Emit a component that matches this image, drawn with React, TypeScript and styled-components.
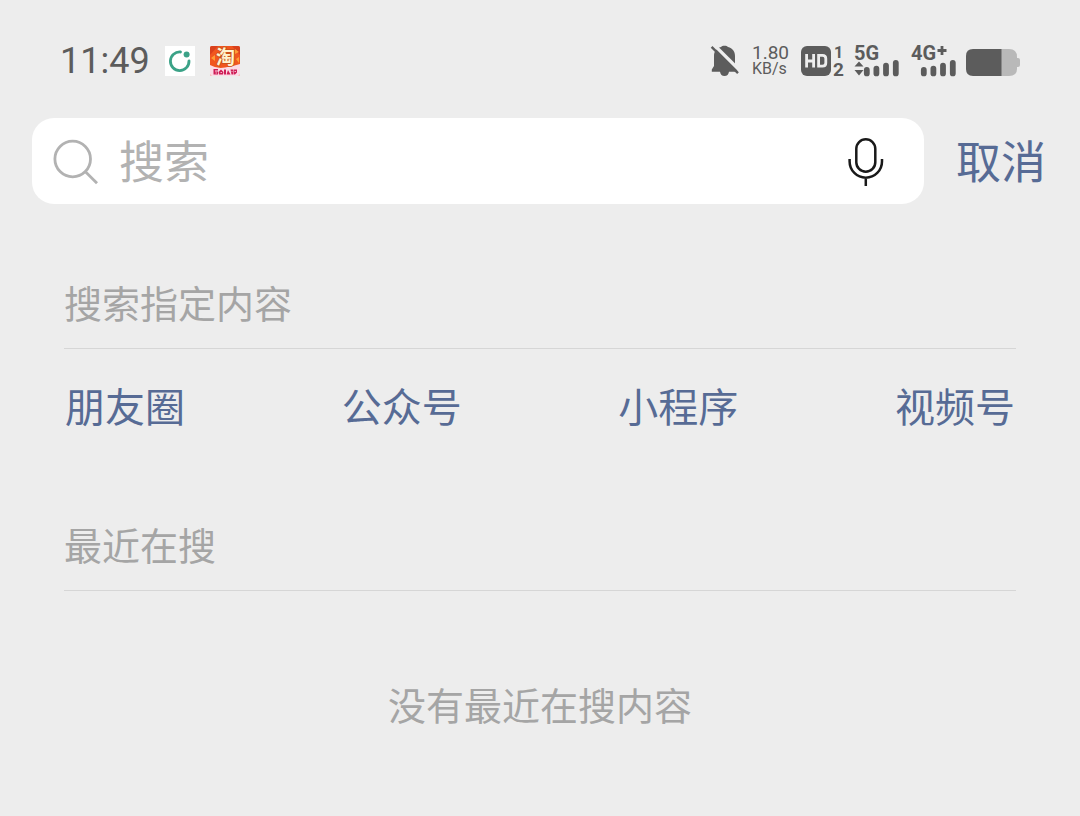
import React from "react";
import styled, { createGlobalStyle } from "styled-components";

const GlobalStyle = createGlobalStyle`
  * { box-sizing: border-box; }
  body {
    margin: 0;
    background: #ededed;
    font-family: Roboto, "Noto Sans CJK SC", sans-serif;
  }
`;

const Page = styled.div`
  min-height: 100vh;
  background: #ededed;
`;

const StatusBar = styled.header`
  display: flex;
  align-items: center;
  justify-content: space-between;
  height: 118px;
  padding: 4px 60px 0;
  color: #5c5c5c;
`;

const StatusGroup = styled.div<{ $gap: number }>`
  display: flex;
  align-items: center;
  gap: ${(p) => p.$gap}px;

  svg {
    display: block;
    overflow: visible;
    font-family: Roboto, sans-serif;
  }
`;

const Time = styled.time`
  font-size: 36px;
  line-height: 40px;
`;

const Speed = styled.div`
  display: flex;
  flex-direction: column;
  width: 40px;
  font-size: 19px;
  line-height: 16px;

  small {
    font-size: 16px;
  }
`;

const SearchRow = styled.form`
  display: flex;
  align-items: center;
  gap: 32px;
  padding: 0 34px 0 32px;
`;

const SearchBox = styled.label`
  display: flex;
  flex: 1;
  align-items: center;
  gap: 20px;
  min-width: 0;
  height: 86px;
  padding: 2px 40px 0 20px;
  border-radius: 22px;
  background: #fff;
`;

const SearchInput = styled.input`
  flex: 1;
  min-width: 0;
  height: 68px;
  padding: 2px 0 0;
  border: 0;
  outline: 0;
  background: transparent;
  color: #191919;
  font: inherit;
  font-size: 45px;

  &::placeholder {
    color: #b2b2b2;
    opacity: 1;
  }
`;

const IconButton = styled.button`
  flex: none;
  padding: 0;
  border: 0;
  background: transparent;
  cursor: pointer;

  svg {
    display: block;
  }
`;

const CancelButton = styled.button`
  flex: none;
  padding: 6px 0 0;
  border: 0;
  background: transparent;
  color: #576b95;
  font: inherit;
  font-size: 45px;
  line-height: 64px;
  cursor: pointer;
`;

const Section = styled.section`
  padding: 73px 64px 0;
`;

const SectionTitle = styled.h2`
  margin: 0;
  padding-bottom: 15px;
  border-bottom: 1px solid #d6d6d6;
  color: #a5a5a5;
  font-size: 38px;
  font-weight: 400;
  line-height: 56px;
`;

const LinkRow = styled.nav`
  display: flex;
  justify-content: space-between;
  padding: 30px 1px 7px;
`;

const TopicLink = styled.a`
  color: #576b95;
  font-size: 40px;
  line-height: 60px;
  text-decoration: none;
`;

const EmptyText = styled.p`
  margin: 0;
  padding: 88px 0 56px;
  color: #a5a5a5;
  font-size: 38px;
  line-height: 56px;
  text-align: center;
`;

const RingAppIcon = () => (
  <svg width="30" height="30" viewBox="0 0 30 30" aria-hidden="true">
    <rect width="30" height="30" fill="#fff" />
    <path d="M15.5 6A9.3 9.3 0 1 0 24 14.800" fill="none" stroke="#3ba287" strokeWidth="2.8" strokeLinecap="round" />
    <circle cx="21.6" cy="8.6" r="3" fill="#3ba287" />
  </svg>
);

const ShopGlyph = styled.text`
  font-family: "Noto Sans CJK SC", sans-serif;
  font-size: 19px;
  font-weight: 700;
  paint-order: stroke;
`;

const ShopAppIcon = () => (
  <svg width="30" height="30" viewBox="0 0 30 30" aria-hidden="true">
    <rect width="30" height="30" rx="2" fill="#f1561f" />
    <path d="M0 2Q0 0 2 0H8L0 9ZM22 0H28Q30 0 30 2V9Z" fill="#d9411c" />
    <path d="M1 12L5 9V15ZM25 3L29 6 25 8ZM26 13L29 11V17Z" fill="#ff9c35" />
    <path d="M0 19Q7 23 15 21.500T30 18V28Q30 30 28 30H2Q0 30 0 28Z" fill="#fbdbe6" />
    <ShopGlyph x="15.500" y="17.500" textAnchor="middle" fill="#fff3cf" stroke="#c9501a" strokeWidth="1.6">
      淘
    </ShopGlyph>
    <path d="M3.500 23H8V24.500H5V25.500H8V28.500H3.500ZM8.500 26L11 23.500 13.500 26 13 28.500H9ZM14 23.500H16V28.500H14ZM16.500 28.500L18 24 20.500 28.500ZM20.500 23.500H23V28.500H21.500ZM23.500 23.500H27V26.500L25 28.500H23.500Z" fill="#cf1d57" />
    <path d="M5.500 27H7M10.500 26.500H12M21.500 25.500H22.500M24.500 25.500H26" stroke="#fbdbe6" strokeWidth=".8" />
  </svg>
);

const MutedBellIcon = () => (
  <svg width="32" height="32" viewBox="0 0 32 32" aria-label="静音" role="img">
    <path d="M13.500 .8C15 .8 16.400 1.200 17 2C21.600 3.200 24 6.500 24 11V21L26.500 24.500V26.800H18C17.600 29.600 16 31 13.500 31S9.400 29.600 9 26.800H.8V24.500L3 21V11C3 6.500 5.400 3.200 10 2C10.600 1.200 12 .8 13.500 .8Z" fill="#5c5c5c" />
    <path d="M2.800 -.4L30 26.800" stroke="#ededed" strokeWidth="3.400" />
    <path d="M.6 1.800L27 28.200" stroke="#5c5c5c" strokeWidth="2.400" />
  </svg>
);

const HdIcon = () => (
  <svg width="44" height="32" viewBox="0 0 44 32" fill="#5c5c5c" fontWeight="700" aria-label="HD 1 2" role="img">
    <rect y="1" width="30" height="30" rx="6" />
    <path d="M5.600 9V22.500M12.600 9V22.500M5.600 16H12.600M17.600 10.400H21.500Q24.800 10.400 24.800 13.500V18Q24.800 21.100 21.500 21.100H17.600Z" fill="none" stroke="#ededed" strokeWidth="2.8" />
    <text x="33" y="13" fontSize="16">1</text>
    <text x="32" y="31" fontSize="19">2</text>
  </svg>
);

const Bars = () => (
  <path d="M12.800 25V28.400M22.400 23.600V28.400M32 20.600V28.400M41.800 17.800V28.400" stroke="#5c5c5c" strokeWidth="5.800" strokeLinecap="round" />
);

const Signal5G = () => (
  <svg width="48" height="32" viewBox="0 0 48 32" fill="#5c5c5c" aria-label="5G" role="img">
    <text x="0" y="15" fontSize="20" fontWeight="700">5G</text>
    <path d="M.5 21.500L5 16.500 9.500 21.500ZM.5 25L5 30.500 9.500 25Z" />
    <Bars />
  </svg>
);

const Signal4G = () => (
  <svg width="46" height="32" viewBox="0 0 46 32" fill="#5c5c5c" aria-label="4G+" role="img">
    <text x="0" y="15" fontSize="20" fontWeight="700">4G</text>
    <path d="M26.500 5.500H35.500M31 1V10" stroke="#5c5c5c" strokeWidth="2.8" />
    <Bars />
  </svg>
);

const BatteryIcon = () => (
  <svg width="54" height="32" viewBox="0 -4 54 32" aria-label="电量" role="img">
    <path d="M35 0H43Q51 0 51 8V9H52Q54 9 54 11V16Q54 18 52 18H51V20Q51 27 43 27H35Z" fill="#b9b9b9" />
    <path d="M35.500 0V27H7Q0 27 0 20V7Q0 0 7 0Z" fill="#5c5c5c" />
  </svg>
);

const SearchIcon = () => (
  <svg width="47" height="48" viewBox="0 0 47 48" fill="none" stroke="#b2b2b2" strokeWidth="2.8" aria-hidden="true">
    <circle cx="20.700" cy="21" r="17.800" />
    <path d="M33.200 33.600L45 45.300" />
  </svg>
);

const MicIcon = () => (
  <svg width="36" height="50" viewBox="0 0 36 50" fill="none" stroke="#191919" strokeWidth="2.500" aria-hidden="true">
    <rect x="8.300" y="2.300" width="19" height="32.400" rx="9.500" />
    <path d="M1.600 22V24.500A16.200 16.200 0 0 0 34 24.500V22M17.800 40.700V49" />
  </svg>
);

const topics = ["朋友圈", "公众号", "小程序", "视频号"];

export default function App() {
  return (
    <Page lang="zh-CN">
      <GlobalStyle />
      <StatusBar>
        <StatusGroup $gap={15}>
          <Time>11:49</Time>
          <RingAppIcon />
          <ShopAppIcon />
        </StatusGroup>
        <StatusGroup $gap={9}>
          <MutedBellIcon />
          <Speed>
            <span>1.80</span>
            <small>KB/s</small>
          </Speed>
          <HdIcon />
          <Signal5G />
          <Signal4G />
          <BatteryIcon />
        </StatusGroup>
      </StatusBar>
      <main>
        <SearchRow role="search" onSubmit={(e) => e.preventDefault()}>
          <SearchBox>
            <SearchIcon />
            <SearchInput type="text" placeholder="搜索" aria-label="搜索" />
            <IconButton type="button" aria-label="语音输入">
              <MicIcon />
            </IconButton>
          </SearchBox>
          <CancelButton type="button">取消</CancelButton>
        </SearchRow>
        <Section>
          <SectionTitle>搜索指定内容</SectionTitle>
          <LinkRow>
            {topics.map((topic) => (
              <TopicLink href="#" key={topic}>
                {topic}
              </TopicLink>
            ))}
          </LinkRow>
        </Section>
        <Section>
          <SectionTitle>最近在搜</SectionTitle>
          <EmptyText>没有最近在搜内容</EmptyText>
        </Section>
      </main>
    </Page>
  );
}
